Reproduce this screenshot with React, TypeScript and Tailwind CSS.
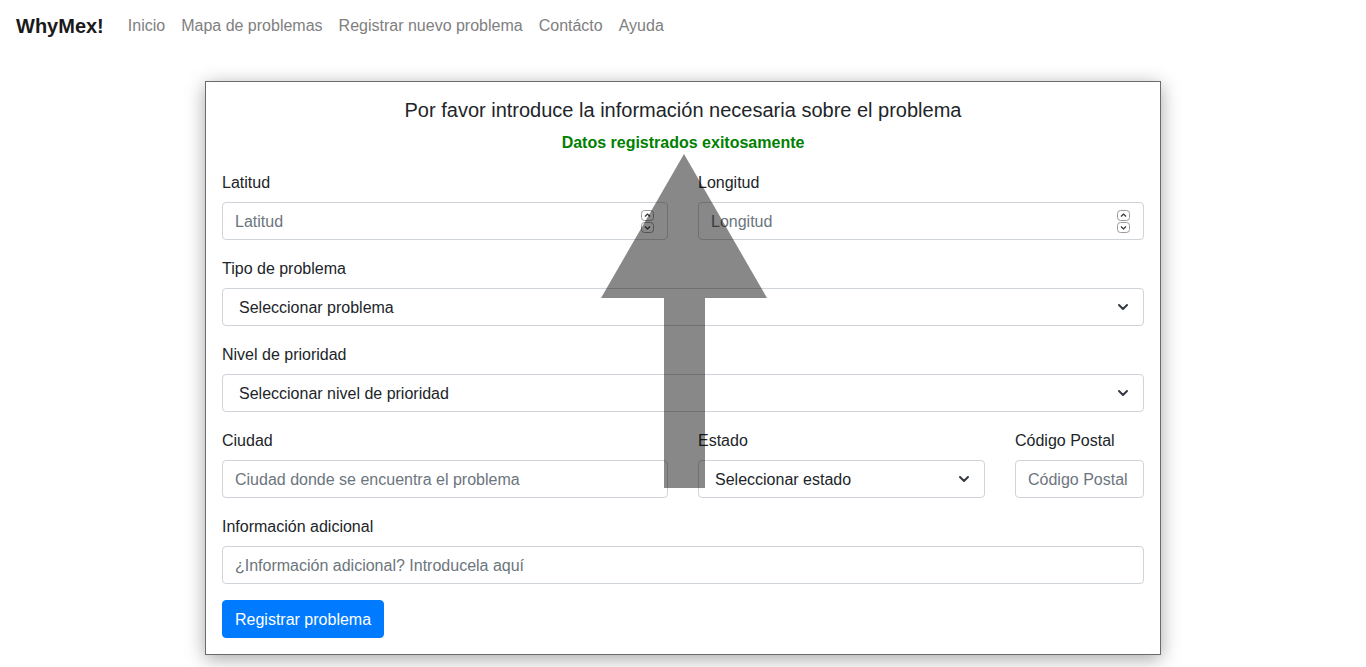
import React from "react";

const font = { fontFamily: '"Liberation Sans", Arial, sans-serif' };

const navLinks = ["Inicio", "Mapa de problemas", "Registrar nuevo problema", "Contácto", "Ayuda"];

const Spinner = () => (
  <div className="flex flex-col gap-[1px] ml-2">
    <svg width="13" height="11" viewBox="0 0 13 11">
      <rect x="0.5" y="0.5" width="12" height="10" rx="3" fill="none" stroke="#9a9a9a" />
      <path d="M4 6.5 L6.5 4 L9 6.5" fill="none" stroke="#333" strokeWidth="1.2" />
    </svg>
    <svg width="13" height="11" viewBox="0 0 13 11">
      <rect x="0.5" y="0.5" width="12" height="10" rx="3" fill="none" stroke="#9a9a9a" />
      <path d="M4 4.5 L6.5 7 L9 4.5" fill="none" stroke="#333" strokeWidth="1.2" />
    </svg>
  </div>
);

const NumberField = ({ placeholder }: { placeholder: string }) => (
  <div className="flex items-center h-[38px] border border-[#ced4da] rounded-[4px] bg-white pl-3 pr-[13px]">
    <input
      type="text"
      placeholder={placeholder}
      className="flex-1 min-w-0 pt-[2px] outline-none text-base text-[#495057] placeholder:text-[#6c757d] bg-transparent"
    />
    <Spinner />
  </div>
);

const TextField = ({ placeholder }: { placeholder: string }) => (
  <input
    type="text"
    placeholder={placeholder}
    className="w-full h-[38px] border border-[#ced4da] rounded-[4px] px-3 pt-[2px] text-base text-[#495057] placeholder:text-[#6c757d] outline-none"
  />
);

const SelectField = ({ value }: { value: string }) => (
  <div className="flex items-center justify-between h-[38px] border border-[#ced4da] rounded-[4px] bg-white pl-4 pr-[12px] text-base text-[#212529]">
    <span className="pt-[2px]">{value}</span>
    <svg width="16" height="12" viewBox="0 0 16 12">
      <path d="M4 4 L8 8 L12 4" fill="none" stroke="#343a40" strokeWidth="2" strokeLinecap="round" strokeLinejoin="round" />
    </svg>
  </div>
);

const Field = ({ label, children }: { label: string; children: React.ReactNode }) => (
  <div className="mb-4">
    <label className="block pt-[1px] mb-[7px] leading-6 text-base text-[#212529]">{label}</label>
    {children}
  </div>
);

export default function App() {
  return (
    <div className="min-h-screen bg-white" style={font}>
      {/* Navbar */}
      <nav className="flex items-center h-[50px] px-4 pt-[2px]">
        <span className="text-[20px] font-bold text-[#1a1a1a] mr-4">WhyMex!</span>
        <ul className="flex">
          {navLinks.map((link) => (
            <li key={link} className="px-2 text-base text-[#808080]">
              {link}
            </li>
          ))}
        </ul>
      </nav>

      {/* Form card */}
      <div className="relative w-[956px] mx-auto mt-[31px] border border-[#6b6b6b] bg-white p-4 shadow-[0_4px_18px_rgba(0,0,0,0.35)]">
        <h5 className="text-center text-[20px] leading-6 text-[#212529] mb-2">
          Por favor introduce la información necesaria sobre el problema
        </h5>
        <p className="text-center font-bold leading-6 text-[#008000] pt-[1px] mb-[15px]">Datos registrados exitosamente</p>

        <div className="grid grid-cols-2 gap-x-[30px]">
          <Field label="Latitud">
            <NumberField placeholder="Latitud" />
          </Field>
          <Field label="Longitud">
            <NumberField placeholder="Longitud" />
          </Field>
        </div>

        <Field label="Tipo de problema">
          <SelectField value="Seleccionar problema" />
        </Field>

        <Field label="Nivel de prioridad">
          <SelectField value="Seleccionar nivel de prioridad" />
        </Field>

        <div className="grid grid-cols-[446px_287px_1fr] gap-x-[30px]">
          <Field label="Ciudad">
            <TextField placeholder="Ciudad donde se encuentra el problema" />
          </Field>
          <Field label="Estado">
            <SelectField value="Seleccionar estado" />
          </Field>
          <Field label="Código Postal">
            <TextField placeholder="Código Postal" />
          </Field>
        </div>

        <Field label="Información adicional">
          <TextField placeholder="¿Información adicional? Introducela aquí" />
        </Field>

        <button className="h-[38px] px-3 pt-[2px] rounded-[4px] border border-[#007bff] bg-[#007bff] text-white text-base">
          Registrar problema
        </button>

        {/* Annotation arrow overlay */}
        <svg
          className="absolute left-[395px] top-[72px] pointer-events-none"
          width="166"
          height="334"
          viewBox="0 0 166 334"
        >
          <polygon points="83,0 166,144 104,144 104,334 63,334 63,144 0,144" fill="#000" fillOpacity="0.467" />
        </svg>
      </div>
    </div>
  );
}
